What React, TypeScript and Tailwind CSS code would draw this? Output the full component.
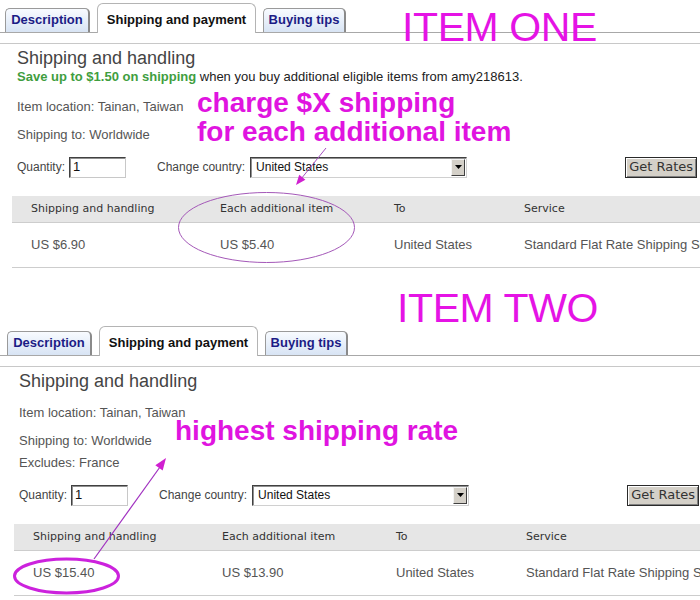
import React from 'react';

type SectionProps = {
  shift?: boolean;
  saveLine?: boolean;
  excludes?: boolean;
  first: string;
  each: string;
};

function Tabs({ shift }: { shift?: boolean }) {
  return (
    <div className={`flex items-end h-[33px] border-b border-[#a8a8a8] gap-[7px] ${shift ? 'pl-[7px]' : 'pl-[5px]'}`}>
      <div className="h-[24px] w-[85px] flex items-center justify-center pb-[2px] rounded-t-[5px] border-t border-l border-[#9a9a9a] border-r-2 border-r-[#8a8a8a] bg-linear-to-b from-[#f8fbff] to-[#d8e4f4] text-[13px] font-bold text-[#1c1c86]">
        Description
      </div>
      <div className="relative z-10 -mb-px h-[30px] w-[159px] flex items-center justify-center pt-[3px] rounded-t-[6px] border-t border-l border-r border-[#b4b4b4] bg-white text-[13px] font-bold text-[#111]">
        Shipping and payment
      </div>
      <div className="h-[24px] w-[83px] flex items-center justify-center pb-[2px] rounded-t-[5px] border-t border-l border-[#9a9a9a] border-r-2 border-r-[#8a8a8a] bg-linear-to-b from-[#f8fbff] to-[#d8e4f4] text-[13px] font-bold text-[#1c1c86]">
        Buying tips
      </div>
    </div>
  );
}

function Section({ shift, saveLine, excludes, first, each }: SectionProps) {
  const pad = shift ? 'pl-[19px]' : 'pl-[17px]';
  return (
    <div>
      <Tabs shift={shift} />
      <div className="mt-[10px] border-t border-[#c8c8c8] pt-[4px]">
        <div className={`${pad} text-[18px] leading-[20px] text-[#444]`}>Shipping and handling</div>
        {saveLine && (
          <div className={`${pad} mt-[1px] text-[13px] leading-[16px] text-[#222]`}>
            <span className="font-bold text-[#3f9e3f]">Save up to $1.50 on shipping</span> when you buy additional eligible items from amy218613.
          </div>
        )}
        <div className={`${pad} mt-[14px] text-[13px] leading-[16px] text-[#555]`}>Item location: Tainan, Taiwan</div>
        <div className={`${pad} mt-[12px] text-[13px] leading-[16px] text-[#555]`}>Shipping to: Worldwide</div>
        {excludes && (
          <div className={`${pad} mt-[6px] text-[13px] leading-[16px] text-[#555]`}>Excludes: France</div>
        )}
        <div className={`${pad} mt-[13px] h-[22px] flex items-center text-[12px] text-[#444]`}>
          <span>Quantity:</span>
          <div className="ml-[4px] w-[57px] h-[21px] flex items-center pl-[3px] border border-[#c8c8c8] border-t-[#404040] border-l-[#404040] shadow-[inset_1px_1px_0_#909090] text-[13px] text-[#111]">
            1
          </div>
          <span className="ml-[31px]">Change country:</span>
          <div className="ml-[5px] w-[217px] h-[21px] flex items-center justify-between border border-[#d0d0d0] border-t-[#404040] border-l-[#404040] shadow-[inset_1px_1px_0_#909090] bg-white">
            <span className="pl-[5px] text-[12px] text-[#111]">United States</span>
            <div className="mr-px w-[14px] h-[17px] flex items-center justify-center bg-[#d4d0c8] border border-[#f4f4f4] border-r-[#404040] border-b-[#404040]">
              <svg width="7" height="4" viewBox="0 0 7 4"><polygon points="0,0 7,0 3.5,4" fill="#000" /></svg>
            </div>
          </div>
          <div className="ml-[158px] w-[72px] h-[21px] flex items-center justify-center bg-[#d4d0c8] border border-[#2a2a2a] shadow-[inset_1px_1px_0_#ffffff,inset_-1px_-1px_0_#808080] font-['DejaVu_Sans',Verdana,sans-serif] text-[13px] text-[#333]">
            Get Rates
          </div>
        </div>
        <div className={`mt-[18px] w-[760px] ${shift ? 'ml-[14px]' : 'ml-[12px]'}`}>
          <div className="h-[27px] flex items-center bg-[#e6e6e6] border-b border-[#cdcdcd] font-['DejaVu_Sans',Verdana,sans-serif] text-[11px] text-[#333]">
            <div className="w-[208px] pl-[19px]">Shipping and handling</div>
            <div className="w-[174px]">Each additional item</div>
            <div className="w-[130px]">To</div>
            <div>Service</div>
          </div>
          <div className="h-[45px] flex items-center border-b border-[#cdcdcd] text-[13px] text-[#555] whitespace-nowrap">
            <div className="w-[208px] pl-[19px]">{first}</div>
            <div className="w-[174px]">{each}</div>
            <div className="w-[130px]">United States</div>
            <div>Standard Flat Rate Shipping Service</div>
          </div>
        </div>
      </div>
    </div>
  );
}

export default function App() {
  return (
    <div className="relative w-[700px] h-[600px] overflow-hidden bg-white font-['Liberation_Sans',Arial,sans-serif]">
      <Section saveLine first="US $6.90" each="US $5.40" />
      <div className="mt-[55px]">
        <Section shift excludes first="US $15.40" each="US $13.90" />
      </div>

      {/* annotations drawn over the screenshot */}
      <div className="absolute left-[402px] top-[7px] text-[41px] leading-none tracking-[-0.4px] text-[#e513e5] whitespace-nowrap">ITEM ONE</div>
      <div className="absolute left-[397px] top-[288px] text-[41px] leading-none tracking-[-0.4px] text-[#e513e5] whitespace-nowrap">ITEM TWO</div>
      <div className="absolute left-[197px] top-[88px] text-[28px] leading-[29px] font-bold text-[#e014e0] whitespace-nowrap">
        charge $X shipping<br />for each additional item
      </div>
      <div className="absolute left-[175px] top-[416px] text-[28px] leading-[29px] font-bold text-[#e014e0] whitespace-nowrap">
        highest shipping rate
      </div>
      <svg className="absolute inset-0 pointer-events-none" width="700" height="600" viewBox="0 0 700 600">
        <line x1="326" y1="148" x2="301" y2="179" stroke="#a450c0" strokeWidth="1" />
        <polygon points="296,185 305.4,179.7 299.2,174.7" fill="#d020d0" />
        <ellipse cx="266.5" cy="227.5" rx="88" ry="35" fill="none" stroke="#a458b8" strokeWidth="1" />
        <line x1="94" y1="559" x2="160" y2="467" stroke="#a030c0" strokeWidth="1.2" />
        <polygon points="166,458 162.7,470.4 155.3,465.2" fill="#d020d0" />
        <ellipse cx="66.5" cy="576" rx="52" ry="17" fill="none" stroke="#cc22dd" strokeWidth="3" />
      </svg>
    </div>
  );
}
